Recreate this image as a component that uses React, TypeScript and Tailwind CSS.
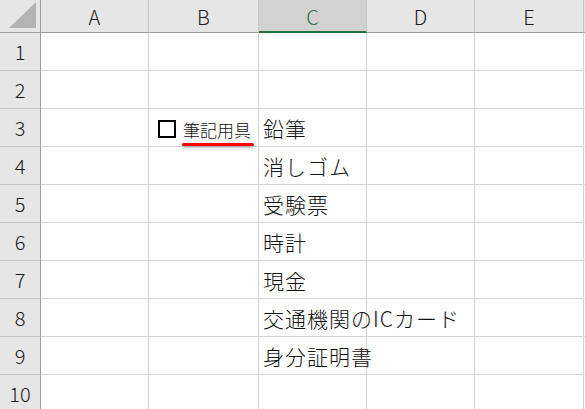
import React from "react";

const cols = ["A", "B", "C", "D", "E"];
const cData: Record<number, string> = {
  3: "鉛筆",
  4: "消しゴム",
  5: "受験票",
  6: "時計",
  7: "現金",
  8: "交通機関のICカード",
  9: "身分証明書",
};

const font = { fontFamily: '"Noto Sans CJK JP", "Noto Sans", sans-serif' };

export default function App() {
  const rows = Array.from({ length: 10 }, (_, i) => i + 1);
  return (
    <div className="w-[585px] h-[409px] overflow-hidden bg-white relative" style={font}>
      <div className="grid grid-cols-[41px_108px_110px_108px_108px_109px_1fr] grid-rows-[33px_repeat(10,38px)]">
        {/* corner */}
        <div className="bg-[#e6e6e6] border-r border-b border-r-[#9e9e9e] border-b-[#9e9e9e] relative">
          <svg width="40" height="32" className="absolute left-0 top-0">
            <polygon points="9,28 36,28 36,2" fill="#b4b4b4" />
          </svg>
        </div>
        {cols.map((c) =>
          c === "C" ? (
            <div
              key={c}
              className="bg-[#d2d2d2] border-r border-r-[#c6c6c6] border-b-2 border-b-[#217346] flex items-center justify-center text-[20px] font-light text-[#217346] leading-none"
            >
              <span className="mt-[2px]">{c}</span>
            </div>
          ) : (
            <div
              key={c}
              className="bg-[#e6e6e6] border-r border-r-[#c6c6c6] border-b border-b-[#9e9e9e] flex items-center justify-center text-[20px] font-light text-[#1a1a1a] leading-none"
            >
              <span className="mt-[1px]">{c}</span>
            </div>
          )
        )}
        <div className="bg-[#e6e6e6] border-b border-b-[#9e9e9e]" />
        {rows.map((r) => (
          <React.Fragment key={r}>
            <div className="bg-[#e6e6e6] border-r border-r-[#9e9e9e] border-b border-b-[#c6c6c6] flex items-center justify-center text-[20px] font-light text-[#1a1a1a] leading-none">
              {r}
            </div>
            {cols.map((c) => (
              <div
                key={c}
                className="border-r border-b border-[#d4d4d4] flex items-center pl-[4px] text-[21px] font-light tracking-[1px] text-[#111] leading-none whitespace-nowrap overflow-visible"
              >
                {c === "C" && cData[r] ? <span className="mt-[1px]">{cData[r]}</span> : null}
              </div>
            ))}
            <div className="border-b border-[#d4d4d4]" />
          </React.Fragment>
        ))}
      </div>
      {/* floating check box */}
      <div className="absolute left-[158px] top-[120px] flex items-center">
        <div className="w-[18px] h-[18px] border-2 border-black bg-white" />
        <span className="ml-[7px] text-[17px] font-light leading-none text-[#111]">筆記用具</span>
      </div>
      <div className="absolute left-[182px] top-[143px] w-[72px] h-[3px] rounded-full bg-[#ff0000] shadow-[0_2px_3px_rgba(0,0,0,0.25)]" />
    </div>
  );
}
